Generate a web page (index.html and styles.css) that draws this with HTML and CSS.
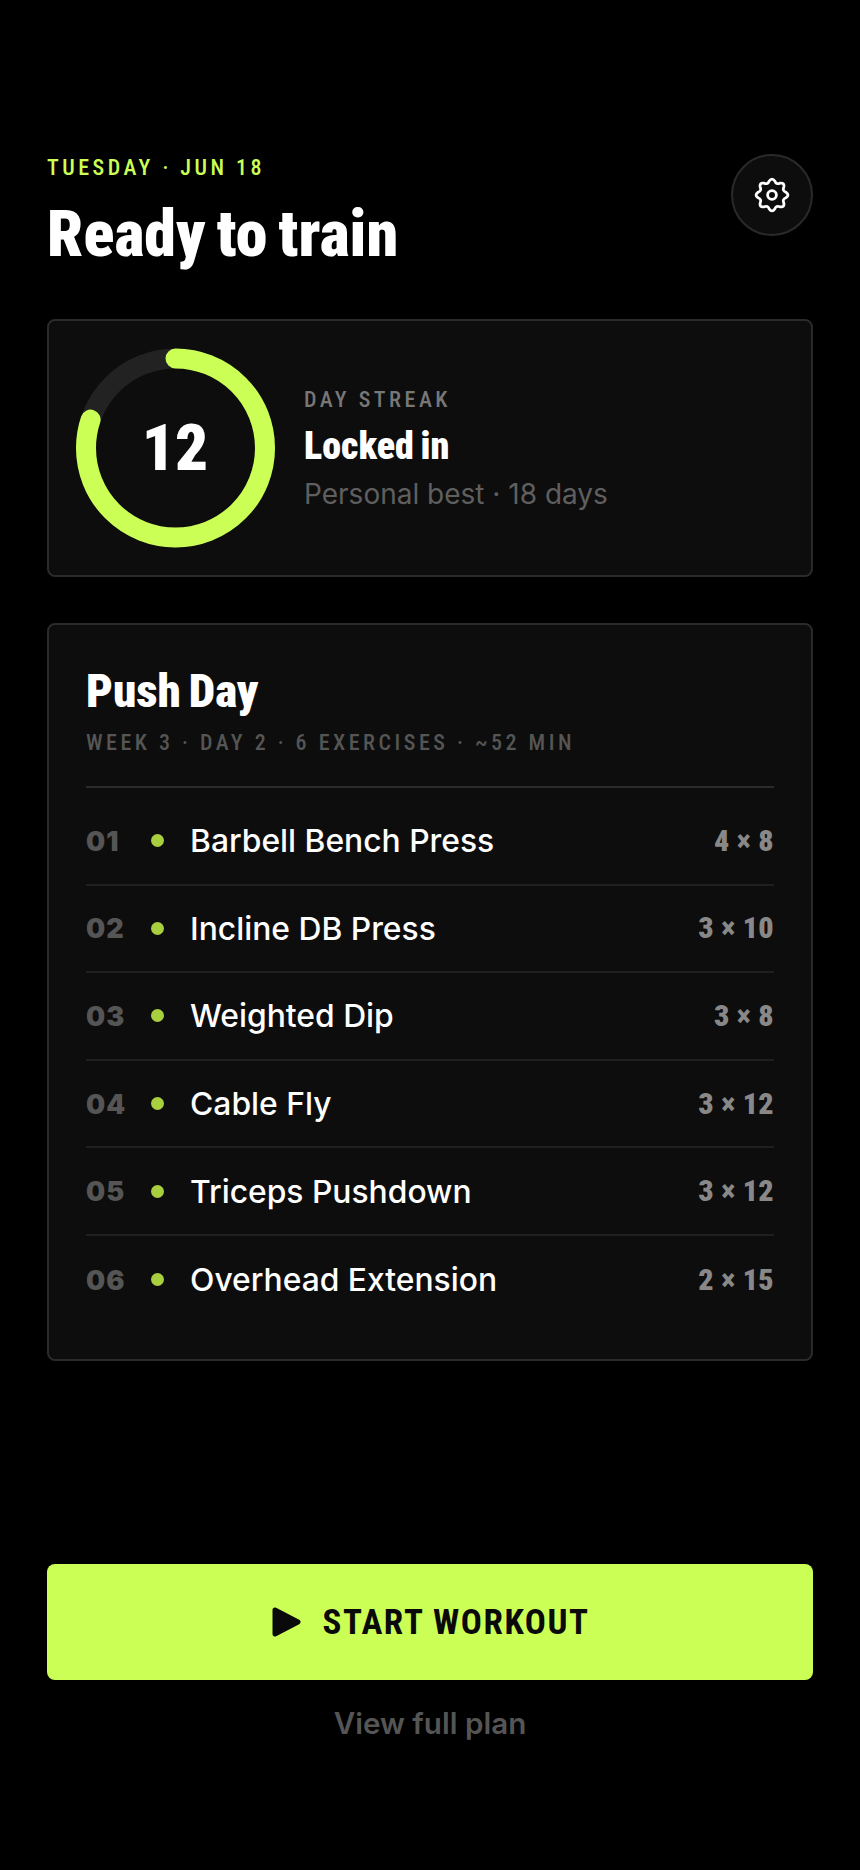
FILE: index.html
```html
<!DOCTYPE html>
<html>
  <head>
    <meta charset="utf-8">
    <title>Ready to train</title>
    <link rel="stylesheet" href="styles.css">
  </head>
  <body>
    <div class="screen">
      <header class="top">
        <div>
          <p class="date">TUESDAY · JUN 18</p>
          <h1 class="title">Ready to train</h1>
        </div>
        <button class="gear" type="button" aria-label="Settings">
          <svg width="36" height="36" viewBox="0 0 36 36" fill="none" stroke="#fff" stroke-width="2.8" stroke-linejoin="round">
            <path d="M31.93 15.23Q36 18 31.93 20.77Q28.16 22.21 29.8 25.9Q30.73 30.73 25.9 29.8Q22.21 28.16 20.77 31.93Q18 36 15.23 31.93Q13.79 28.16 10.1 29.8Q5.27 30.73 6.2 25.9Q7.84 22.21 4.07 20.77Q0 18 4.07 15.23Q7.84 13.79 6.2 10.1Q5.27 5.27 10.1 6.2Q13.79 7.84 15.23 4.07Q18 0 20.77 4.07Q22.21 7.84 25.9 6.2Q30.73 5.27 29.8 10.1Q28.16 13.79 31.93 15.23Z"/>
            <circle cx="18" cy="18" r="4.4"/>
          </svg>
        </button>
      </header>

      <section class="card streak">
        <div class="ring">
          <svg width="200" height="200" viewBox="0 0 200 200" fill="none" stroke-width="20">
            <circle cx="99.5" cy="100" r="89.5" stroke="#222"/>
            <circle cx="99.5" cy="100" r="89.5" stroke="#ccff55" stroke-linecap="round" stroke-dasharray="450 562.4" transform="rotate(-90 99.5 100)"/>
          </svg>
          <span class="ring-num">12</span>
        </div>
        <div class="streak-text">
          <p class="streak-label">DAY STREAK</p>
          <p class="streak-name">Locked in</p>
          <p class="streak-best">Personal best · 18 days</p>
        </div>
      </section>

      <section class="card plan">
        <h2 class="plan-title">Push Day</h2>
        <p class="plan-meta">WEEK 3 · DAY 2 · 6 EXERCISES · ~52 MIN</p>
        <ul class="list">
          <li class="row"><span class="num">01</span><span class="dot"></span><span class="name">Barbell Bench Press</span><span class="sets">4 × 8</span></li>
          <li class="row"><span class="num">02</span><span class="dot"></span><span class="name">Incline DB Press</span><span class="sets">3 × 10</span></li>
          <li class="row"><span class="num">03</span><span class="dot"></span><span class="name">Weighted Dip</span><span class="sets">3 × 8</span></li>
          <li class="row"><span class="num">04</span><span class="dot"></span><span class="name">Cable Fly</span><span class="sets">3 × 12</span></li>
          <li class="row"><span class="num">05</span><span class="dot"></span><span class="name">Triceps Pushdown</span><span class="sets">3 × 12</span></li>
          <li class="row"><span class="num">06</span><span class="dot"></span><span class="name">Overhead Extension</span><span class="sets">2 × 15</span></li>
        </ul>
      </section>

      <div class="actions">
        <button class="start" type="button">
          <svg width="30" height="32" viewBox="0 0 30 32"><path d="M3 4 L26 16 L3 28 Z" fill="#0a0a0a" stroke="#0a0a0a" stroke-width="5" stroke-linejoin="round"/></svg>
          <span>START WORKOUT</span>
        </button>
        <p class="view">View full plan</p>
      </div>
    </div>
  </body>
</html>
```

FILE: styles.css
```css
* {
  box-sizing: border-box;
}

html, body {
  margin: 0;
  background: #000;
}

p, h1, h2, ul {
  margin: 0;
  padding: 0;
}

.screen {
  width: 860px;
  height: 1870px;
  padding: 153px 47px 0;
  font-family: Inter, "Liberation Sans", sans-serif;
  color: #fff;
}

.top {
  display: flex;
  justify-content: space-between;
  align-items: flex-start;
  height: 166px;
}

.date {
  font: 500 22px/30px Roboto, sans-serif;
  font-stretch: 75%;
  letter-spacing: 3.5px;
  color: #ccff55;
}

.title {
  margin-top: 17px;
  font: 900 64px/70px Roboto, sans-serif;
  font-stretch: 75%;
  letter-spacing: 0.1px;
  word-spacing: -4px;
}

.gear {
  width: 82px;
  height: 82px;
  margin-top: 1px;
  display: flex;
  align-items: center;
  justify-content: center;
  padding: 0;
  background: #0d0d0d;
  border: 2px solid #2a2a2a;
  border-radius: 50%;
}

.card {
  background: #0d0d0d;
  border: 2px solid #2a2a2a;
  border-radius: 8px;
}

.streak {
  display: flex;
  align-items: center;
  gap: 28px;
  height: 258px;
  padding: 0 27px;
}

.ring {
  position: relative;
  width: 200px;
  height: 200px;
}

.ring svg {
  display: block;
}

.ring-num {
  position: absolute;
  inset: 0 2px 0 0;
  display: flex;
  align-items: center;
  justify-content: center;
  font: 900 65px/1 Roboto, sans-serif;
  font-stretch: 86%;
}

.streak-label {
  font: 500 22px/30px Roboto, sans-serif;
  font-stretch: 75%;
  letter-spacing: 3.5px;
  color: #777;
}

.streak-name {
  margin-top: 9px;
  font: 900 38px/44px Roboto, sans-serif;
  font-stretch: 75%;
  word-spacing: -2px;
}

.streak-best {
  margin-top: 9px;
  font-size: 28px;
  line-height: 34px;
  color: #5f5f5f;
}

.plan {
  margin-top: 46px;
  height: 738px;
  padding: 38px 37px 0;
}

.plan-title {
  font: 900 47px/56px Roboto, sans-serif;
  font-stretch: 75%;
  word-spacing: -3px;
}

.plan-meta {
  margin-top: 9px;
  padding-bottom: 28px;
  font: 500 22px/30px Roboto, sans-serif;
  font-stretch: 75%;
  letter-spacing: 3.5px;
  color: #555;
  border-bottom: 2px solid #2a2a2a;
}

.list {
  list-style: none;
  padding-top: 10px;
}

.row {
  display: flex;
  align-items: center;
  height: 87.6px;
  border-bottom: 2px solid #1f1f1f;
}

.row:last-child {
  border-bottom: 0;
}

.num {
  width: 65px;
  padding-top: 1px;
  font: 900 27px/1 Inter, sans-serif;
  letter-spacing: 1px;
  color: #555;
}

.dot {
  width: 13px;
  height: 13px;
  border-radius: 50%;
  background: #a8cf3e;
}

.name {
  margin-left: 26px;
  flex: 1;
  font-size: 31.8px;
  font-weight: 500;
}

.sets {
  font: 900 30px/1 Roboto, sans-serif;
  font-stretch: 75%;
  letter-spacing: 0.3px;
  color: #888;
}

.actions {
  margin-top: 203px;
}

.start {
  width: 100%;
  height: 116px;
  padding: 0 0 0 2px;
  display: flex;
  align-items: center;
  justify-content: center;
  gap: 20px;
  background: #ccff55;
  border: 0;
  border-radius: 8px;
  color: #0a0a0a;
  font: 700 35px/1 Roboto, sans-serif;
  font-stretch: 75%;
  letter-spacing: 1.55px;
}

.view {
  margin-top: 25px;
  text-align: center;
  font-size: 29.6px;
  line-height: 36px;
  font-weight: 600;
  color: #555;
}
```
